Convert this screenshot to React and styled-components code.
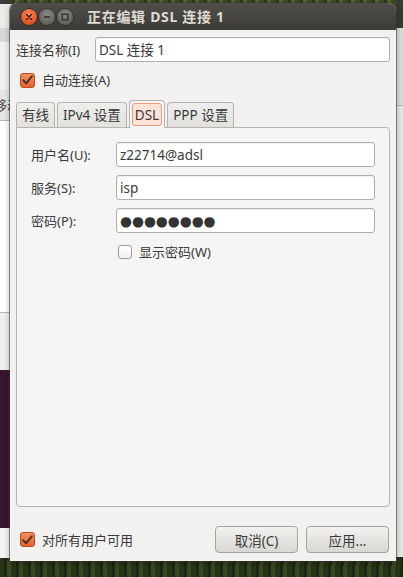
import React from "react"
import styled, { createGlobalStyle } from "styled-components"

const GlobalStyle = createGlobalStyle`
    html, body {
        margin: 0;
        padding: 0;
        background: #2f3a1c;
    }
    body {
        font-family: "Noto Sans", "Noto Sans CJK SC", sans-serif;
        font-size: 13px;
        line-height: 16px;
        color: #3a3a3a;
    }
`

const Desktop = styled.div`
    position: relative;
    width: 403px;
    height: 577px;
    overflow: hidden;
    background:
        repeating-linear-gradient(92deg, rgba(20, 30, 10, 0.55) 0 3px, rgba(120, 140, 60, 0.25) 3px 7px, rgba(40, 55, 20, 0.4) 7px 12px),
        linear-gradient(#4a5a2a, #26321a);
`

// windows lying behind the dialog on the desktop
const BackWindow = styled.div`
    position: absolute;
    left: ${p => p.left}px;
    top: ${p => p.top}px;
    width: ${p => p.width}px;
    height: ${p => p.height}px;
    background: ${p => p.bg};
    border-bottom: ${p => p.line ? "1px solid #b9b7b3" : "none"};
    overflow: hidden;
`

const BackText = styled.span`
    position: absolute;
    left: -6px;
    top: 7px;
    font-size: 13px;
    color: #4a4a4a;
    white-space: nowrap;
`

const Dialog = styled.div`
    position: absolute;
    left: 10px;
    top: 3px;
    width: 386px;
    height: 558px;
    display: flex;
    flex-direction: column;
    background: #f2f1f0;
    border-radius: 7px 7px 0 0;
    box-shadow: 0 0 0 1px rgba(60, 59, 55, 0.55), 0 2px 6px rgba(0, 0, 0, 0.35);
    overflow: hidden;
`

const TitleBar = styled.div`
    height: 27px;
    flex: none;
    display: flex;
    align-items: center;
    padding-left: 11px;
    background: linear-gradient(#504f4a, #3c3b37);
`

const WinButtons = styled.div`
    display: flex;
    gap: 2px;
    margin-right: 14px;
`

const WinButton = styled.div`
    width: 16px;
    height: 16px;
    border-radius: 50%;
    display: flex;
    align-items: center;
    justify-content: center;
    background: ${p => p.close
        ? "radial-gradient(circle at 50% 35%, #f88a5e, #e0511f 70%, #b83e14)"
        : "radial-gradient(circle at 50% 35%, #8c8a84, #64625d 70%, #4c4a46)"};
    box-shadow: 0 0 0 1px rgba(30, 30, 28, 0.6);
`

const Title = styled.div`
    font-weight: bold;
    font-size: 14px;
    color: #dfdbd2;
    letter-spacing: 0.7px;
`

const Body = styled.div`
    flex: 1;
    display: flex;
    flex-direction: column;
    padding: 7px 6px 8px 6px;
`

const FieldRow = styled.div`
    display: grid;
    grid-template-columns: ${p => p.labelWidth}px 1fr;
    align-items: center;
`

const Label = styled.label`
    white-space: nowrap;
`

const TextInput = styled.div`
    height: 25px;
    box-sizing: border-box;
    display: flex;
    align-items: center;
    padding: 0 3px;
    background: #ffffff;
    border: 1px solid #b2afa9;
    border-radius: 3px;
    box-shadow: inset 0 1px 1px rgba(0, 0, 0, 0.06);
    font-size: 13.5px;
    color: #3a3a3a;
`

const Dots = styled.span`
    font-family: "DejaVu Sans", sans-serif;
    font-size: 13.7px;
    color: #333;
`

const CheckRow = styled.div`
    display: flex;
    align-items: center;
    gap: 7px;
    margin: ${p => p.margin || "0"};
`

const Box = styled.span`
    width: ${p => p.checked ? 15 : 14}px;
    height: ${p => p.checked ? 15 : 14}px;
    box-sizing: border-box;
    border-radius: 3px;
    display: inline-flex;
    align-items: center;
    justify-content: center;
    border: 1px solid ${p => p.checked ? "#b14e27" : "#9c9a95"};
    background: ${p => p.checked
        ? "linear-gradient(#f58e5e, #e5622f)"
        : "linear-gradient(#ffffff, #f1f0ee)"};
`

const Tabs = styled.div`
    display: flex;
    align-items: flex-end;
    height: 28px;
    gap: 2px;
    margin-top: 11px;
`

const Tab = styled.div`
    height: ${p => p.active ? 28 : 25}px;
    box-sizing: border-box;
    padding: ${p => p.active ? "3px 2px" : "0 5px"};
    display: flex;
    align-items: center;
    border: 1px solid #b6b3ae;
    border-bottom: none;
    border-radius: 4px 4px 0 0;
    background: ${p => p.active ? "#f5f5f5" : "linear-gradient(#efeeec, #e2e1de)"};
    font-size: 13.5px;
    color: #3a3a3a;
    margin-bottom: ${p => p.active ? "-1px" : "0"};
    position: relative;
    z-index: ${p => p.active ? 1 : 0};
`

const FocusRing = styled.span`
    padding: 0 2px;
    height: 21px;
    display: flex;
    align-items: center;
    border: 1px solid #e89a7c;
    border-radius: 3px;
    background: #fbe3d8;
`

const Panel = styled.div`
    flex: 1;
    display: flex;
    flex-direction: column;
    gap: 8px;
    padding: 14px 14px 0 14px;
    background: #f5f5f5;
    border: 1px solid #b6b3ae;
    border-radius: 0 4px 4px 4px;
`

const Footer = styled.div`
    display: flex;
    align-items: center;
    margin-top: 19px;
    padding-left: 4px;
`

const Buttons = styled.div`
    display: flex;
    gap: 8px;
    margin-left: auto;
    margin-right: 1px;
`

const Button = styled.button`
    width: 83px;
    height: 27px;
    border: 1px solid #a7a49f;
    border-radius: 4px;
    background: linear-gradient(#f3f2f0, #d9d7d3);
    font-family: "Noto Sans", "Noto Sans CJK SC", sans-serif;
    font-size: 13.5px;
    color: #3a3a3a;
    padding: 0;
`

const Check = () => (
    <svg width="11" height="10" viewBox="0 0 11 10">
        <path d="M1.2 5.2 L4.2 8.3 L9.8 1.3" fill="none" stroke="#4d3226" strokeWidth="2" strokeLinecap="round" strokeLinejoin="round" />
    </svg>
)

const CheckBox = ({ checked }) => (
    <Box checked={checked}>{checked && <Check />}</Box>
)

const App = () => {
    const fields = [
        { label: "用户名(U):", value: "z22714@adsl" },
        { label: "服务(S):", value: "isp" },
        { label: "密码(P):", password: true }
    ]

    return (
        <Desktop>
            <GlobalStyle />
            <BackWindow left={0} top={0} width={12} height={4} bg="#3c3b37" />
            <BackWindow left={0} top={4} width={12} height={24} bg="#ebebea" />
            <BackWindow left={0} top={28} width={12} height={14} bg="#d9d8d6" />
            <BackWindow left={0} top={42} width={12} height={48} bg="#f0f0ef" />
            <BackWindow left={0} top={90} width={12} height={30} bg="#e6e5e3" line>
                <BackText>移动</BackText>
            </BackWindow>
            <BackWindow left={0} top={121} width={12} height={191} bg="#ffffff" line />
            <BackWindow left={0} top={313} width={12} height={57} bg="#eeeeed" />
            <BackWindow left={0} top={370} width={12} height={158} bg="#3a1532" />
            <BackWindow left={0} top={528} width={12} height={30} bg="#f3f3f2" />
            <BackWindow left={396} top={0} width={7} height={28} bg="#3a3935" />
            <BackWindow left={396} top={28} width={7} height={77} bg="#dcdbd9" line />
            <BackWindow left={396} top={106} width={7} height={451} bg="#e9e8e6" />

            <Dialog>
                <TitleBar>
                    <WinButtons>
                        <WinButton close>
                            <svg width="8" height="8" viewBox="0 0 8 8">
                                <path d="M1.5 1.5 L6.5 6.5 M6.5 1.5 L1.5 6.5" stroke="#3a1a0c" strokeWidth="1.4" strokeLinecap="round" />
                            </svg>
                        </WinButton>
                        <WinButton>
                            <svg width="8" height="8" viewBox="0 0 8 8">
                                <path d="M1 4 H7" stroke="#2f2e2b" strokeWidth="1.5" />
                            </svg>
                        </WinButton>
                        <WinButton>
                            <svg width="8" height="8" viewBox="0 0 8 8">
                                <rect x="1.2" y="1.2" width="5.6" height="5.6" fill="none" stroke="#2f2e2b" strokeWidth="1.3" />
                            </svg>
                        </WinButton>
                    </WinButtons>
                    <Title>正在编辑 DSL 连接 1</Title>
                </TitleBar>

                <Body>
                    <FieldRow labelWidth={79}>
                        <Label>连接名称(I)</Label>
                        <TextInput>DSL 连接 1</TextInput>
                    </FieldRow>

                    <CheckRow margin="10px 0 0 4px">
                        <CheckBox checked />
                        <span>自动连接(A)</span>
                    </CheckRow>

                    <Tabs>
                        <Tab>有线</Tab>
                        <Tab>IPv4 设置</Tab>
                        <Tab active><FocusRing>DSL</FocusRing></Tab>
                        <Tab>PPP 设置</Tab>
                    </Tabs>
                    <Panel>
                        {fields.map(f => (
                            <FieldRow labelWidth={85} key={f.label}>
                                <Label>{f.label}</Label>
                                <TextInput>
                                    {f.password ? <Dots>●●●●●●●●</Dots> : f.value}
                                </TextInput>
                            </FieldRow>
                        ))}
                        <CheckRow margin="3px 0 0 87px">
                            <CheckBox />
                            <span>显示密码(W)</span>
                        </CheckRow>
                    </Panel>

                    <Footer>
                        <CheckRow>
                            <CheckBox checked />
                            <span>对所有用户可用</span>
                        </CheckRow>
                        <Buttons>
                            <Button>取消(C)</Button>
                            <Button>应用...</Button>
                        </Buttons>
                    </Footer>
                </Body>
            </Dialog>
        </Desktop>
    )
}

export default App
